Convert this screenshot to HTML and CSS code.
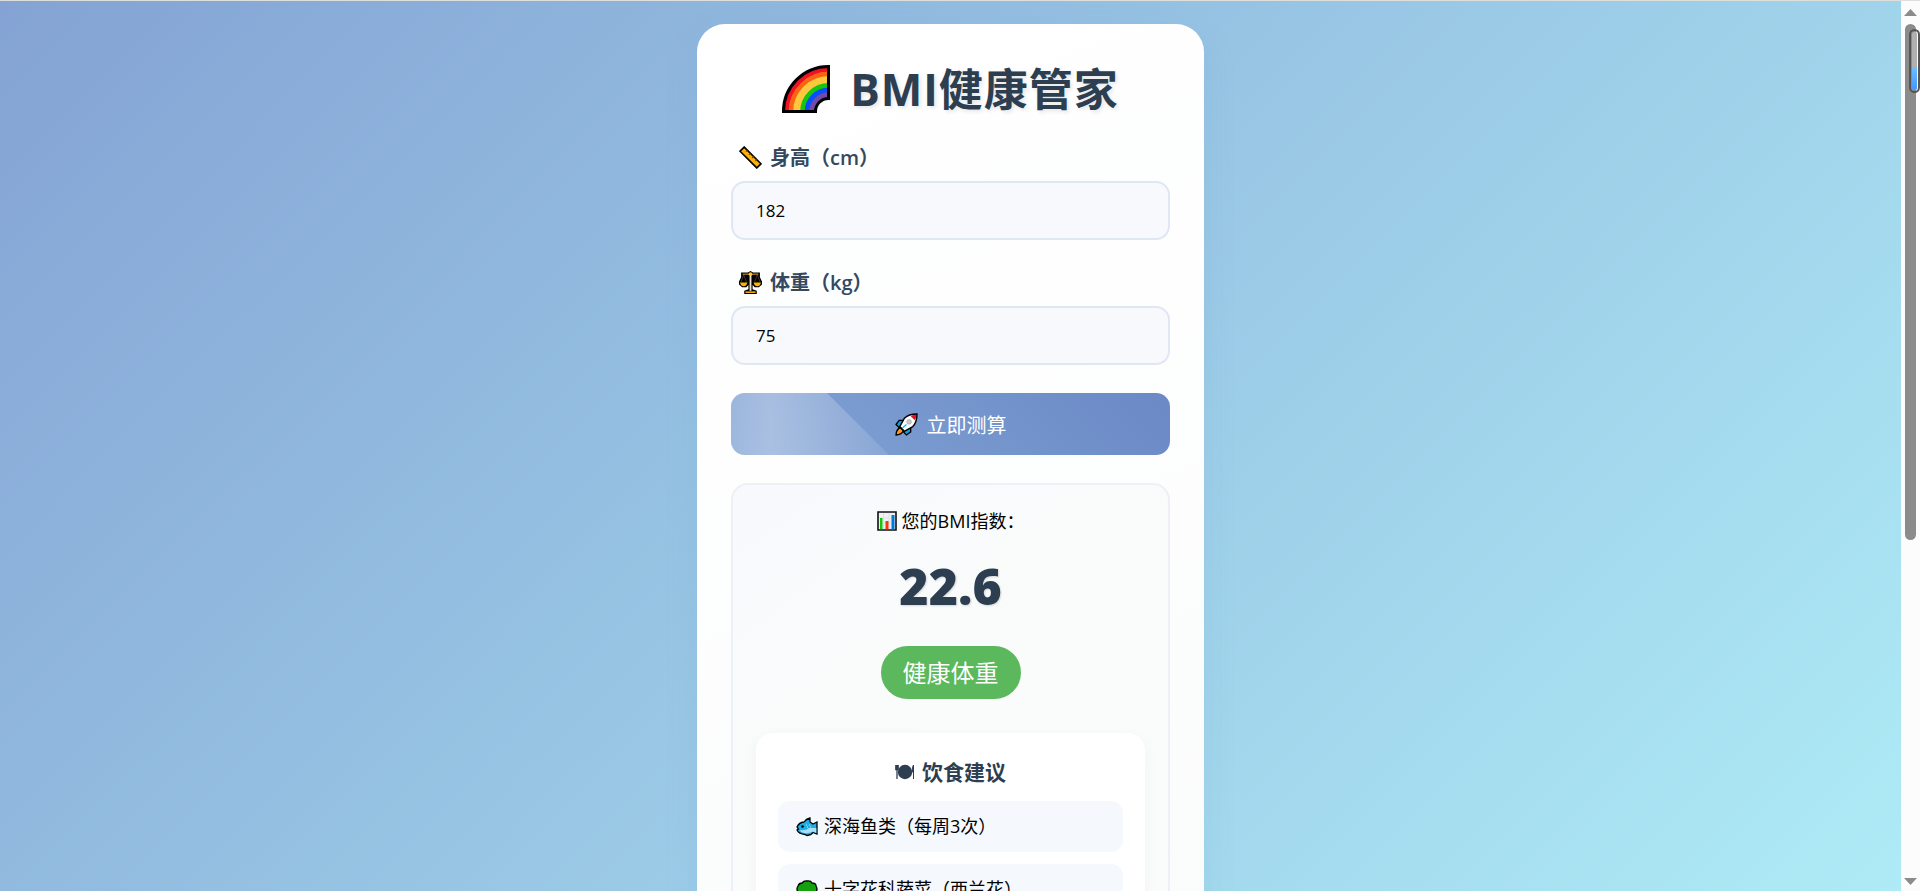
FILE: index.html
```html
<!DOCTYPE html>
<html lang="zh-CN">

<head>
    <meta charset="UTF-8">
    <meta name="viewport" content="width=device-width, initial-scale=1.0">
    <title>BMI健康管家</title>
    <link rel="stylesheet" href="styles.css">
</head>

<body>
    <main class="page">
        <div class="container">
            <h1>
                <svg class="logo" viewBox="0 0 48 48" aria-hidden="true">
                    <path d="M1 47A46 46 0 0 1 47 1V34A13 13 0 0 0 34 47Z" fill="#734ba5"/>
                    <g fill="none" stroke-width="4.8">
                        <path d="M4.5 47A42.500 42.500 0 0 1 47 4.500" stroke="#ee1224"/>
                        <path d="M9 47A38 38 0 0 1 47 9" stroke="#fb6310"/>
                        <path d="M13.500 47A33.500 33.500 0 0 1 47 13.500" stroke="#ffc83d"/>
                        <path d="M18 47A29 29 0 0 1 47 18" stroke="#ffc83d"/>
                        <path d="M20.500 47A26.500 26.500 0 0 1 47 20.500" stroke="#16c60c"/>
                        <path d="M25 47A22 22 0 0 1 47 25" stroke="#0a4dff"/>
                        <path d="M29.700 47A17.300 17.300 0 0 1 47 29.700" stroke="#734ba5"/>
                    </g>
                    <path d="M1.500 46.500A45 45 0 0 1 46.500 1.500V33.500A13 13 0 0 0 33.500 46.500Z" fill="none" stroke="#000" stroke-width="3"/>
                </svg>
                <span>BMI健康管家</span>
            </h1>

            <form class="bmi-form">
                <div class="field">
                    <label for="height">
                        <svg class="icon" viewBox="0 0 22 22" aria-hidden="true">
                            <path d="M5 1L21 17L17 21L1 5Z" fill="#ffb000" stroke="#000" stroke-width="1.600"/>
                            <path d="M8 4L6.500 5.500M11 7L9.500 8.500M14 10L12.500 11.500M17 13L15.500 14.500" stroke="#6b4500" stroke-width="1"/>
                        </svg>
                        身高（cm）
                    </label>
                    <input type="text" inputmode="numeric" id="height" value="182">
                </div>

                <div class="field">
                    <label for="weight">
                        <svg class="icon" viewBox="0 0 22 22" aria-hidden="true">
                            <path d="M2 1.500H8.500L11 0L13.500 1.500H20V6L22 10V13L19 15.500H15L13 13.500V17.500L17 19V22H5V19L9 17.500V13.500L7 15.500H3L0 13V10L2 6Z" fill="#000"/>
                            <path d="M1 11H8Q7.500 14.500 4.500 14.500Q1.500 14.500 1 11ZM14 11H21Q20.500 14.500 17.500 14.500Q14.500 14.500 14 11Z" fill="#ffb000"/>
                            <path d="M4.500 3.500L2 10.500M4.500 3.500L7 10.500M17.500 3.500L15 10.500M17.500 3.500L20 10.500" stroke="#555" stroke-width=".6"/>
                            <path d="M3.500 3H18.500" stroke="#d99a20" stroke-width="1"/>
                            <path d="M11 4V19" stroke="#e8e0d0" stroke-width="1.800"/>
                            <circle cx="11" cy="3" r="1.700" fill="#ffc83d"/>
                            <path d="M6.200 19.500H15.800V21H6.200Z" fill="#ffb000"/>
                        </svg>
                        体重（kg）
                    </label>
                    <input type="text" inputmode="numeric" id="weight" value="75">
                </div>

                <button type="button" class="calc-btn">
                    <svg class="icon" viewBox="0 0 22 22" aria-hidden="true">
                        <path d="M8 7L4 7L1 11L5 15ZM15 14V18L11 21L7 17Z" fill="#00a8e8" stroke="#000" stroke-width="1.300"/>
                        <path d="M5 14Q1 16 1 21Q6 21 8 17Z" fill="#ff9a20" stroke="#000" stroke-width="1.300"/>
                        <path d="M21 1Q13 1 9 5L4.500 13L9 17.500L17 13Q21 9 21 1Z" fill="#fff" stroke="#000" stroke-width="1.400"/>
                        <path d="M20.300 1.700Q17 1.700 15 3L19 7Q20.300 5 20.300 1.700Z" fill="#e81224"/>
                        <circle cx="13.500" cy="8.500" r="2.200" fill="#ccc" stroke="#999" stroke-width=".6"/>
                        <path d="M7 14.500L11 11" stroke="#00a8e8" stroke-width="1"/>
                    </svg>
                    <span>立即测算</span>
                </button>
            </form>

            <section class="result">
                <p class="result-label">
                    <svg class="chart-icon" viewBox="0 0 20 20" aria-hidden="true">
                        <path d="M1 1H19V19H1Z" fill="#f2eff4" stroke="#111" stroke-width="1.600"/>
                        <path d="M6.500 2V18M12 2V18M2 7H18M2 12H18" stroke="#ddd" stroke-width=".8"/>
                        <path d="M3 7H5.500V18.200H3Z" fill="#16c60c"/>
                        <path d="M8.500 10H11.500V18.200H8.500Z" fill="#f03a17"/>
                        <path d="M14.500 4H17.500V18.200H14.500Z" fill="#0078d7"/>
                    </svg>
                    您的BMI指数：
                </p>
                <div class="bmi-value">22.6</div>
                <div class="status">健康体重</div>

                <div class="advice">
                    <h2>
                        <svg class="plate-icon" viewBox="0 0 20 16" aria-hidden="true">
                            <circle cx="10" cy="8" r="7.200" fill="#2c3e50"/>
                            <path d="M.8 1V5.500H3.200V1M2 1V15" fill="none" stroke="#2c3e50" stroke-width="1.300"/>
                            <path d="M18.500 15V1Q17 3 17.300 8H18.500" fill="#2c3e50" stroke="#2c3e50" stroke-width="1"/>
                        </svg>
                        饮食建议
                    </h2>
                    <ul>
                        <li>
                            <svg class="item-icon" viewBox="0 0 22 20" aria-hidden="true">
                                <path d="M1 10Q3 5.500 8 5Q10 2 14 1V5L17 7L21 5V17L17 15.500Q15 18.500 11 18.500L9 17.500Q3 17 1 13L2.500 12Z" fill="#20aee8" stroke="#000" stroke-width="1.300"/>
                                <path d="M3.500 13Q10 14 13 11H20.300V16L17 14.500Q12 17 8 16Q5 15.500 3.500 13Z" fill="#a7dff6"/>
                                <path d="M10 8H11M13 8H14M11 10H12M14 10H15" stroke="#bceaff" stroke-width="1"/>
                                <circle cx="6.500" cy="9.500" r="1.300" fill="#000"/>
                            </svg>
                            深海鱼类（每周3次）
                        </li>
                        <li>
                            <svg class="item-icon" viewBox="0 0 22 20" aria-hidden="true">
                                <path d="M8 12H14L13 19H9Z" fill="#86d72f" stroke="#000" stroke-width="1.200"/>
                                <path d="M2 12Q0 9 2 6Q3 3 6 3Q8 .5 11 1Q15 .5 16 3Q20 3 20 6Q22 9 20 12Q18 15 14 14H8Q4 15 2 12Z" fill="#13a10e" stroke="#000" stroke-width="1.300"/>
                            </svg>
                            十字花科蔬菜（西兰花）
                        </li>
                    </ul>
                </div>
            </section>
        </div>
    </main>

    <div class="scrollbar" aria-hidden="true">
        <svg class="arrow" viewBox="0 0 13 7"><path d="M6.500 0L13 7H0Z"/></svg>
        <div class="track">
            <div class="thumb"></div>
        </div>
        <svg class="arrow" viewBox="0 0 13 7"><path d="M0 0H13L6.500 7Z"/></svg>
        <div class="side-handle"></div>
    </div>
</body>

</html>
```

FILE: styles.css
```css
* {
    margin: 0;
    padding: 0;
    box-sizing: border-box;
}

body {
    font-family: "Open Sans", "Noto Sans CJK SC", sans-serif;
    display: flex;
    height: 100vh;
    overflow: hidden;
    border-top: 1px solid #dddfdd;
    color: #000;
}

.page {
    flex: 1;
    display: flex;
    justify-content: center;
    align-items: flex-start;
    padding: 23px;
    overflow: hidden;
    background: linear-gradient(135deg, #84a3d4, #aeebf6);
}

.container {
    width: 100%;
    max-width: 507px;
    padding: 34px;
    border-radius: 28px;
    background: linear-gradient(160deg, #fff, #fafcfb);
    box-shadow: 0 10px 34px rgba(100, 150, 200, 0.12);
}

h1 {
    display: flex;
    justify-content: center;
    align-items: center;
    gap: 20px;
    margin-bottom: 23px;
    font-size: 44px;
    line-height: 62px;
    letter-spacing: 1px;
    color: #2c3e50;
    text-shadow: 2px 2px 4px rgba(0, 0, 0, 0.1);
}

.logo {
    width: 48px;
    height: 48px;
}

.field {
    margin-bottom: 28px;
}

label {
    display: flex;
    align-items: center;
    gap: 8px;
    padding-left: 8px;
    margin-bottom: 9px;
    font-size: 20px;
    font-weight: 600;
    line-height: 29px;
    color: #34495e;
}

.icon {
    width: 23px;
    height: 23px;
}

input {
    display: block;
    width: 100%;
    height: 59px;
    padding: 0 23px;
    border: 2px solid #e0e7f4;
    border-radius: 14px;
    background: #f7f9fd;
    font-family: inherit;
    font-size: 17px;
    color: #000;
}

.calc-btn {
    position: relative;
    display: flex;
    justify-content: center;
    align-items: center;
    gap: 9px;
    width: 100%;
    height: 62px;
    border: none;
    border-radius: 14px;
    overflow: hidden;
    background: linear-gradient(45deg, #82a4d5, #6a89c6);
    color: #fff;
    font-family: inherit;
    font-size: 20px;
    cursor: pointer;
}

/* light sweep over the left part of the button */
.calc-btn::before {
    content: "";
    position: absolute;
    top: 0;
    left: 0;
    width: 158px;
    height: 100%;
    background: linear-gradient(90deg, rgba(255, 255, 255, 0.22), rgba(255, 255, 255, 0.33) 25%, rgba(255, 255, 255, 0.1));
    clip-path: polygon(0 0, 96px 0, 100% 100%, 0 100%);
}

.result {
    margin-top: 28px;
    padding: 23px;
    border: 2px solid #edf1f7;
    border-radius: 17px;
    background: linear-gradient(145deg, #f8f9fd, #fafcfb 50%);
    text-align: center;
}

.result-label {
    display: flex;
    justify-content: center;
    align-items: center;
    gap: 5px;
    font-size: 18px;
    line-height: 26px;
}

.chart-icon {
    width: 20px;
    height: 20px;
}

.bmi-value {
    margin: 18px 0 26px;
    font-size: 50px;
    font-weight: 800;
    line-height: 68px;
    color: #2c3e50;
    text-shadow: 1px 1px 2px rgba(0, 0, 0, 0.15);
}

.status {
    display: inline-block;
    vertical-align: top;
    padding: 0 22px;
    border-radius: 27px;
    background: #5cb85c;
    color: #fff;
    font-size: 24px;
    line-height: 53px;
}

.advice {
    margin-top: 34px;
    padding: 22px;
    border-radius: 17px;
    background: #fff;
    box-shadow: 0 4px 16px rgba(0, 0, 0, 0.04);
}

h2 {
    display: flex;
    justify-content: center;
    align-items: center;
    gap: 7px;
    margin-bottom: 12px;
    font-size: 21px;
    line-height: 34px;
    color: #2c3e50;
}

.plate-icon {
    width: 20px;
    height: 16px;
}

ul {
    display: flex;
    flex-direction: column;
    gap: 12px;
    list-style: none;
}

li {
    display: flex;
    align-items: center;
    gap: 6px;
    padding: 12px 18px;
    border-radius: 12px;
    background: #f5f8fd;
    font-size: 18px;
    line-height: 27px;
}

.item-icon {
    width: 22px;
    height: 20px;
}

.scrollbar {
    position: relative;
    display: flex;
    flex-direction: column;
    align-items: center;
    gap: 8px;
    width: 19px;
    padding: 8px 0 6px;
    background: #fcfcfc;
}

.arrow {
    width: 13px;
    height: 7px;
    fill: #8b8b8b;
}

.track {
    flex: 1;
    width: 11px;
}

.thumb {
    height: 61%;
    border-radius: 6px;
    background: #8b8b8b;
}

.side-handle {
    position: absolute;
    top: 28px;
    right: 0;
    width: 11px;
    height: 64px;
    border: 2px solid #555;
    border-radius: 6px;
    background: linear-gradient(#b0b0b0 60%, #6cc0ff 60%, #4595ff) content-box;
    background-color: #b0b0b0;
    padding: 1px;
}
```
